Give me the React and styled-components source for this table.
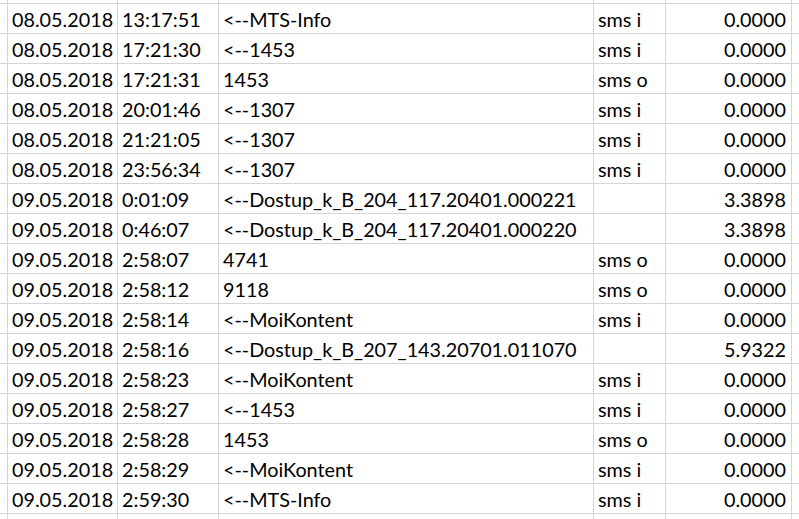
import React from 'react';
import styled, { createGlobalStyle } from 'styled-components';

const GlobalStyle = createGlobalStyle`
  html, body {
    margin: 0;
    padding: 0;
    background: #ffffff;
    overflow: hidden;
  }
`;

const Sheet = styled.div`
  display: grid;
  grid-template-columns: 7px 109px 100px 374px 71px 125px 1fr;
  grid-template-rows: 3px repeat(17, 29px) 1fr;
  gap: 1px;
  width: 799px;
  height: 519px;
  background: #d4d4d4;
  overflow: hidden;
  font-family: Lato, "Liberation Sans", sans-serif;
  font-size: 19.8px;
  color: #000;
`;

const Cell = styled.div`
  background: #ffffff;
  line-height: 30px;
  white-space: nowrap;
  overflow: visible;
  padding: 0 ${p => (p.$right ? '5px' : '0')} 0 ${p => (p.$right ? '0' : '4px')};
  text-align: ${p => (p.$right ? 'right' : 'left')};
`;

const rows = [
  ['08.05.2018', '13:17:51', '<--MTS-Info', 'sms i', '0.0000'],
  ['08.05.2018', '17:21:30', '<--1453', 'sms i', '0.0000'],
  ['08.05.2018', '17:21:31', '1453', 'sms o', '0.0000'],
  ['08.05.2018', '20:01:46', '<--1307', 'sms i', '0.0000'],
  ['08.05.2018', '21:21:05', '<--1307', 'sms i', '0.0000'],
  ['08.05.2018', '23:56:34', '<--1307', 'sms i', '0.0000'],
  ['09.05.2018', '0:01:09', '<--Dostup_k_B_204_117.20401.000221', '', '3.3898'],
  ['09.05.2018', '0:46:07', '<--Dostup_k_B_204_117.20401.000220', '', '3.3898'],
  ['09.05.2018', '2:58:07', '4741', 'sms o', '0.0000'],
  ['09.05.2018', '2:58:12', '9118', 'sms o', '0.0000'],
  ['09.05.2018', '2:58:14', '<--MoiKontent', 'sms i', '0.0000'],
  ['09.05.2018', '2:58:16', '<--Dostup_k_B_207_143.20701.011070', '', '5.9322'],
  ['09.05.2018', '2:58:23', '<--MoiKontent', 'sms i', '0.0000'],
  ['09.05.2018', '2:58:27', '<--1453', 'sms i', '0.0000'],
  ['09.05.2018', '2:58:28', '1453', 'sms o', '0.0000'],
  ['09.05.2018', '2:58:29', '<--MoiKontent', 'sms i', '0.0000'],
  ['09.05.2018', '2:59:30', '<--MTS-Info', 'sms i', '0.0000'],
];

function EmptyRow() {
  return (
    <>
      {Array.from({ length: 7 }).map((_, i) => <Cell key={i} />)}
    </>
  );
}

export default function App() {
  return (
    <>
      <GlobalStyle />
      <Sheet>
        <EmptyRow />
        {rows.map((r, i) => (
          <React.Fragment key={i}>
            <Cell />
            <Cell>{r[0]}</Cell>
            <Cell>{r[1]}</Cell>
            <Cell>{r[2]}</Cell>
            <Cell>{r[3]}</Cell>
            <Cell $right>{r[4]}</Cell>
            <Cell />
          </React.Fragment>
        ))}
        <EmptyRow />
      </Sheet>
    </>
  );
}
